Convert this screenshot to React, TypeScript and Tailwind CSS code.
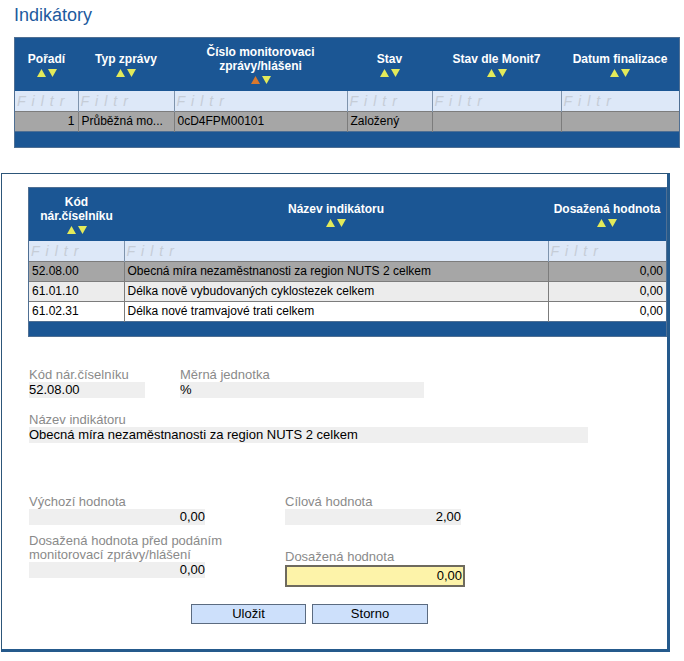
import React from "react";

const font = "font-['Liberation_Sans',Arial,sans-serif]";

function SortArrows({ activeUp = false }: { activeUp?: boolean }) {
  return (
    <span className="flex justify-center gap-[2px] mt-[3px]">
      <svg width="9" height="8" viewBox="0 0 9 8">
        <polygon points="4.5,0 9,8 0,8" fill={activeUp ? "#d9782d" : "#e3ea5a"} />
      </svg>
      <svg width="9" height="8" viewBox="0 0 9 8">
        <polygon points="0,0 9,0 4.5,8" fill="#e3ea5a" />
      </svg>
    </span>
  );
}

function HeadCell({ children, w, active }: { children: React.ReactNode; w: number; active?: boolean }) {
  return (
    <th style={{ width: w }} className="px-1 align-middle text-center font-bold text-[12px] leading-[14px] text-white">
      <div>{children}</div>
      <SortArrows activeUp={active} />
    </th>
  );
}

function FilterCell({ first }: { first?: boolean }) {
  return (
    <td className={`h-[20px] bg-[#dde8f8] px-[2px] ${first ? "" : "border-l border-[#7f94ad]"}`}>
      <span className="block whitespace-nowrap italic text-[14px] leading-[16px] tracking-[6px] text-[#c6cdd7]">
        Filtr
      </span>
    </td>
  );
}

function Field({ label, value, w, right }: { label: React.ReactNode; value: string; w: number; right?: boolean }) {
  return (
    <div className="flex flex-col">
      <div className="text-[13px] leading-[14px] text-[#8a8a8a]">{label}</div>
      <div
        style={{ width: w }}
        className={`h-[16px] bg-[#efefef] text-[13px] leading-[16px] text-black whitespace-nowrap ${right ? "text-right" : ""}`}
      >
        {value}
      </div>
    </div>
  );
}

export default function App() {
  const topCols = [
    { t: "Pořadí", w: 63 },
    { t: "Typ zprávy", w: 96 },
    { t: <>Číslo monitorovaci<br />zprávy/hlášeni</>, w: 173, active: true },
    { t: "Stav", w: 85 },
    { t: "Stav dle Monit7", w: 129 },
    { t: "Datum finalizace", w: 118 },
  ];

  const rows = [
    { k: "52.08.00", n: "Obecná míra nezaměstnanosti za region NUTS 2 celkem", v: "0,00", bg: "bg-[#a6a6a6]" },
    { k: "61.01.10", n: "Délka nově vybudovaných cyklostezek celkem", v: "0,00", bg: "bg-[#ececec]" },
    { k: "61.02.31", n: "Délka nové tramvajové trati celkem", v: "0,00", bg: "bg-white" },
  ];

  return (
    <div className={`${font} w-[684px] h-[661px] bg-white overflow-hidden text-black`}>
      <h1 className="pl-[14px] pt-[4px] text-[18px] leading-[22px] text-[#1d5a9e]">Indikátory</h1>

      <div className="ml-[14px] mt-[11px] w-[666px] border border-[#4f6f93]">
        <table className="w-full border-collapse table-fixed">
          <thead>
            <tr className="h-[53px] bg-[#1b5694]">
              {topCols.map((c, i) => (
                <HeadCell key={i} w={c.w} active={c.active}>
                  {c.t}
                </HeadCell>
              ))}
            </tr>
          </thead>
          <tbody>
            <tr>
              {topCols.map((_, i) => (
                <FilterCell key={i} first={i === 0} />
              ))}
            </tr>
            <tr className="h-[20px] bg-[#a6a6a6] text-[12px] leading-[14px] border-t border-[#7c7c7c]">
              <td className="px-[3px] text-right">1</td>
              <td className="px-[3px] border-l border-[#7c7c7c] whitespace-nowrap overflow-hidden">Průběžná mo...</td>
              <td className="px-[3px] border-l border-[#7c7c7c]">0cD4FPM00101</td>
              <td className="px-[3px] border-l border-[#7c7c7c]">Založený</td>
              <td className="px-[3px] border-l border-[#7c7c7c]"></td>
              <td className="px-[3px] border-l border-[#7c7c7c]"></td>
            </tr>
            <tr className="h-[16px] bg-[#1b5694] border-t border-[#4f6f93]">
              <td colSpan={6}></td>
            </tr>
          </tbody>
        </table>
      </div>

      <div className="ml-[1px] mt-[25px] w-[669px] h-[479px] border-l border-t border-[#2d5679] border-r-[3px] border-b-[3px] border-r-[#255a8c] border-b-[#255a8c] pl-[26px] pt-[13px]">
        <div className="w-[639px] border border-[#4f6f93]">
          <table className="w-full border-collapse table-fixed">
            <thead>
              <tr className="h-[53px] bg-[#1b5694]">
                <HeadCell w={95}>
                  Kód
                  <br />
                  nár.číselníku
                </HeadCell>
                <th style={{ width: 424 }} className="align-middle text-center font-bold text-[12px] leading-[14px] text-white">
                  <div>Název indikátoru</div>
                  <SortArrows />
                </th>
                <HeadCell w={118}>Dosažená hodnota</HeadCell>
              </tr>
            </thead>
            <tbody>
              <tr>
                <FilterCell first />
                <FilterCell />
                <FilterCell />
              </tr>
              {rows.map((r, i) => (
                <tr key={i} className={`${r.bg} h-[20px] text-[12px] leading-[14px] border-t border-[#7c7c7c]`}>
                  <td className="px-[3px]">{r.k}</td>
                  <td className="px-[3px] border-l border-[#7c7c7c] whitespace-nowrap">{r.n}</td>
                  <td className="px-[3px] border-l border-[#7c7c7c] text-right">{r.v}</td>
                </tr>
              ))}
              <tr className="h-[15px] bg-[#1b5694] border-t border-[#4f6f93]">
                <td colSpan={3}></td>
              </tr>
            </tbody>
          </table>
        </div>

        <div className="pl-[1px] mt-[31px] flex flex-col">
          <div className="flex gap-[35px]">
            <Field label="Kód nár.číselníku" value="52.08.00" w={116} />
            <Field label="Měrná jednotka" value="%" w={244} />
          </div>
          <div className="mt-[15px]">
            <Field label="Název indikátoru" value="Obecná míra nezaměstnanosti za region NUTS 2 celkem" w={559} />
          </div>
          <div className="mt-[52px] flex">
            <div className="w-[256px]">
              <Field label="Výchozí hodnota" value="0,00" w={176} right />
            </div>
            <Field label="Cílová hodnota" value="2,00" w={176} right />
          </div>
          <div className="mt-[9px] flex items-start">
            <div className="w-[256px]">
              <Field
                label={
                  <>
                    Dosažená hodnota před podáním
                    <br />
                    monitorovací zprávy/hlášení
                  </>
                }
                value="0,00"
                w={176}
                right
              />
            </div>
            <div className="flex flex-col pt-[16px]">
              <div className="text-[13px] leading-[14px] text-[#8a8a8a]">Dosažená hodnota</div>
              <div className="mt-[1px] w-[180px] h-[22px] border-2 border-[#6e6a5e] bg-[#fdf3a9] text-right text-[13px] leading-[18px] pr-[1px]">
                0,00
              </div>
            </div>
          </div>
          <div className="mt-[17px] flex gap-[6px] pl-[162px]">
            <button className="w-[115px] h-[20px] border border-[#5b6b80] bg-[#cde0fb] text-[13px] font-normal leading-[18px]">Uložit</button>
            <button className="w-[116px] h-[20px] border border-[#5b6b80] bg-[#cde0fb] text-[13px] font-normal leading-[18px]">Storno</button>
          </div>
        </div>
      </div>
    </div>
  );
}
